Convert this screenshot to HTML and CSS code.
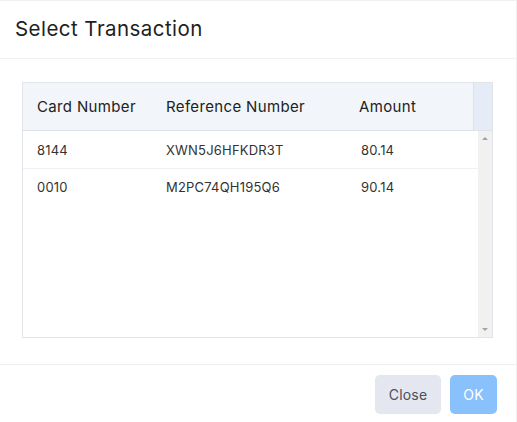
FILE: index.html
```html
<!DOCTYPE html>
<html>
<head>
<meta charset="utf-8">
<link rel="stylesheet" href="styles.css">
</head>
<body>
<div class="dialog">
  <div class="dlg-header"><h1 class="title">Select Transaction</h1></div>
  <div class="dlg-body">
    <div class="grid">
      <div class="grid-head">
        <div class="row head-row">
          <div class="cell">Card Number</div>
          <div class="cell">Reference Number</div>
          <div class="cell">Amount</div>
        </div>
        <div class="head-spacer"></div>
      </div>
      <div class="grid-main">
        <div class="rows">
          <div class="row data-row">
            <div class="cell">8144</div>
            <div class="cell">XWN5J6HFKDR3T</div>
            <div class="cell amt">80.14</div>
          </div>
          <div class="row data-row">
            <div class="cell">0010</div>
            <div class="cell">M2PC74QH195Q6</div>
            <div class="cell amt">90.14</div>
          </div>
        </div>
        <div class="scrollbar">
          <span class="arrow up"></span>
          <span class="arrow down"></span>
        </div>
      </div>
    </div>
  </div>
  <div class="dlg-footer">
    <button class="btn btn-close">Close</button>
    <button class="btn btn-ok">OK</button>
  </div>
</div>
</body>
</html>
```
FILE: styles.css
```css
* { box-sizing: border-box; }
html, body { margin: 0; padding: 0; background: #fff; }
body { font-family: "Inter", "Noto Sans", sans-serif; color: #222; }
.dialog {
  width: 517px; height: 422px;
  border-top: 1px solid #f0f0f0;
  border-right: 1px solid #f0f0f0;
  display: flex; flex-direction: column;
}
.dlg-header {
  height: 58px; padding: 0 0 3px 15px;
  display: flex; align-items: center;
  border-bottom: 1px solid #eef0f3;
}
.title { margin: 0; font-size: 20.5px; font-weight: 400; color: #1e1e1e; letter-spacing: 0.45px; }
.dlg-body { height: 306px; padding: 23px 22px 0 22px; border-bottom: 1px solid #eceef2; }
.grid {
  width: 471px; height: 256px;
  border: 1px solid #e1e4e9;
  display: flex; flex-direction: column;
}
.grid-head { display: flex; height: 48px; background: #f2f5f9; border-bottom: 1px solid #dfe3e8; }
.row { display: grid; grid-template-columns: 129px 193px 1fr; align-items: center; }
.head-row { flex: 1; padding-left: 14px; font-size: 15px; color: #222; letter-spacing: 0.35px; }
.head-spacer { width: 19px; background: #e6ebf8; border-left: 1px solid #dde1ea; }
.grid-main { flex: 1; display: flex; }
.rows { flex: 1; }
.data-row { height: 37px; padding-left: 14px; font-size: 13px; color: #333; letter-spacing: 0.2px; }
.data-row + .data-row { border-top: 1px solid #eef0f3; }
.amt { padding-left: 2px; }
.scrollbar {
  width: 14px; background: #f1f1f1;
  display: flex; flex-direction: column; justify-content: space-between; align-items: center;
  padding: 6px 0;
}
.arrow { width: 0; height: 0; border-left: 3px solid transparent; border-right: 3px solid transparent; }
.arrow.up { border-bottom: 3px solid #a3a3a3; }
.arrow.down { border-top: 3px solid #a3a3a3; }
.dlg-footer {
  flex: 1; display: flex; justify-content: flex-end; align-items: flex-start;
  gap: 9px; padding: 10px 19px 0 0;
}
.btn {
  height: 39px; border: none; border-radius: 5px;
  font-family: inherit; font-size: 14px; letter-spacing: 0.2px;
}
.btn-close { width: 66px; background: #e4e7f0; color: #4a4f5a; }
.btn-ok { width: 47px; background: #89c1fc; color: #fff; }
```
